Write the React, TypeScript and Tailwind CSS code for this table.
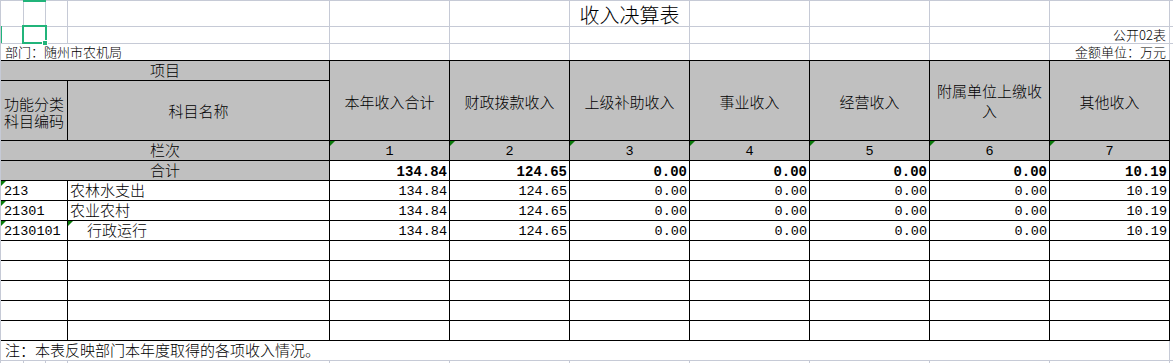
import React from 'react';

const cjk = "font-['Noto_Sans_CJK_SC',sans-serif] font-light";
const mono = "font-['Liberation_Mono','Noto_Sans_CJK_SC',monospace]";

const heads = ['本年收入合计', '财政拨款收入', '上级补助收入', '事业收入', '经营收入', '附属单位上缴收入', '其他收入'];
const total = ['134.84', '124.65', '0.00', '0.00', '0.00', '0.00', '10.19'];

const rows = [
  { code: '213', name: '农林水支出', sub: false, vals: total },
  { code: '21301', name: '农业农村', sub: false, vals: total },
  { code: '2130101', name: '行政运行', sub: true, vals: total },
];

function Mark() {
  return <span className="absolute left-0 top-0 w-0 h-0 border-t-[5px] border-r-[5px] border-t-[#0b7a0b] border-r-transparent" />;
}

function SheetCell({ children, className = '' }: { children?: React.ReactNode; className?: string }) {
  return <div className={`bg-white whitespace-nowrap ${className}`}>{children}</div>;
}

export default function App() {
  return (
    <div className="relative w-[1173px] h-[363px] overflow-hidden bg-white border-l border-[#c6cad6] text-black">
      {/* sheet rows above the table */}
      <div className="grid grid-cols-[22px_21px_21px_261px_repeat(7,119px)_3px] grid-rows-[25px_16px_16px] gap-px bg-[#c6cad6] border-t border-[#c6cad6]">
        {Array.from({ length: 12 }).map((_, i) => (
          <SheetCell key={'r1' + i} className={`text-center ${cjk} text-[20px] leading-[25px] pt-[1px]`}>
            {i === 6 && '收入决算表'}
          </SheetCell>
        ))}
        {Array.from({ length: 12 }).map((_, i) => (
          <SheetCell key={'r2' + i} className={`text-right pr-[3px] ${cjk} text-[13px] leading-[16px]`}>
            {i === 10 && '公开02表'}
          </SheetCell>
        ))}
        <SheetCell className={`col-span-4 pl-[4px] ${cjk} text-[13px] leading-[16px]`}>部门：随州市农机局</SheetCell>
        {Array.from({ length: 6 }).map((_, i) => (
          <SheetCell key={'r3' + i} />
        ))}
        <SheetCell className={`text-right pr-[3px] ${cjk} text-[13px] leading-[16px]`}>金额单位：万元</SheetCell>
        <SheetCell />
      </div>

      {/* table */}
      <div className={`grid w-fit grid-cols-[66px_261px_repeat(7,119px)] grid-rows-[19px_59px_repeat(10,19px)] gap-px bg-black border-t border-r border-b border-black ${cjk} text-[15px]`}>
        <div className="col-span-2 bg-[#c0c0c0] text-center pt-[1px] leading-[16px]">项目</div>
        {heads.map((h, i) => (
          <div
            key={h}
            className={`row-span-2 bg-[#c0c0c0] flex items-center justify-center text-center pt-[1px] ${i === 5 ? 'leading-[20px]' : 'leading-[17px]'}`}
          >
            {h}
          </div>
        ))}
        <div className="bg-[#c0c0c0] flex items-center justify-center text-center pt-[2px] leading-[17px]">功能分类科目编码</div>
        <div className="bg-[#c0c0c0] flex items-center justify-center pt-[1px]">科目名称</div>

        <div className="col-span-2 bg-[#c0c0c0] text-center pt-[1px] leading-[16px]">栏次</div>
        {heads.map((_, i) => (
          <div key={'n' + i} className={`relative bg-[#c0c0c0] text-center pt-[3px] leading-[16px] ${mono} text-[13.5px] font-normal`}>
            <Mark />
            {i + 1}
          </div>
        ))}

        <div className="col-span-2 bg-[#c0c0c0] text-center pt-[1px] leading-[16px]">合计</div>
        {total.map((v, i) => (
          <div key={'t' + i} className={`bg-white text-right pr-[2px] pt-[3px] leading-[16px] ${mono} text-[14px] font-bold`}>
            {v}
          </div>
        ))}

        {rows.map((r) => (
          <React.Fragment key={r.code}>
            <div className={`relative bg-white pl-[3px] pt-[3px] leading-[16px] ${mono} text-[13.5px] font-normal`}>
              <Mark />
              {r.code}
            </div>
            <div className={`relative bg-white pt-[1px] leading-[16px] whitespace-nowrap ${r.sub ? 'pl-[19px]' : 'pl-[2px]'}`}>
              {r.sub && <Mark />}
              {r.name}
            </div>
            {r.vals.map((v, i) => (
              <div key={i} className={`bg-white text-right pr-[2px] pt-[3px] leading-[16px] ${mono} text-[13.5px] font-normal`}>
                {v}
              </div>
            ))}
          </React.Fragment>
        ))}

        {Array.from({ length: 45 }).map((_, i) => (
          <div key={'e' + i} className="bg-white" />
        ))}
      </div>

      {/* sheet rows below the table */}
      <div className="grid grid-cols-[22px_21px_21px_261px_repeat(7,119px)_3px] grid-rows-[19px_10px] gap-px bg-[#c6cad6]">
        <SheetCell className={`col-span-11 pl-[4px] pt-[1px] leading-[16px] ${cjk} text-[15px]`}>注：本表反映部门本年度取得的各项收入情况。</SheetCell>
        <SheetCell />
        {Array.from({ length: 12 }).map((_, i) => (
          <SheetCell key={'b' + i} />
        ))}
      </div>

      {/* selection and header highlights */}
      <div className="absolute left-[-1px] top-[26px] w-[2px] h-[17px] bg-[#21b47a]" />
      <div className="absolute left-[22px] top-0 w-[23px] h-[2px] bg-[#21b47a]" />
      <div className="absolute left-[21px] top-[25px] w-[25px] h-[19px] border-2 border-[#21b47a]" />
      <div className="absolute left-[41px] top-[40px] w-[6px] h-[6px] bg-[#21b47a] border border-white" />
    </div>
  );
}
